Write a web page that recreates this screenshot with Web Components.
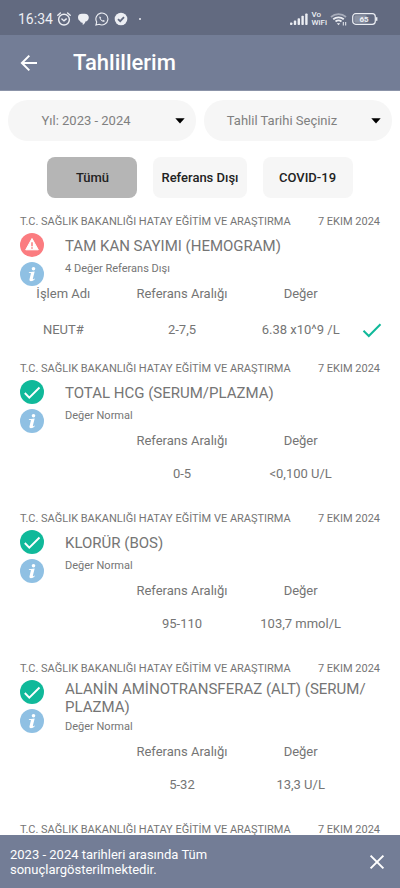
<!DOCTYPE html>
<html lang="tr">
<head>
<meta charset="utf-8">
<meta name="viewport" content="width=device-width, initial-scale=1">
<title>Tahlillerim</title>
<style>
  html, body { margin: 0; height: 100%; }
  body { font-family: Roboto, "Noto Sans", sans-serif; font-size: 13px; line-height: 16px; color: #757575; background: #fff;
    --bar: #737d96; --bar-dark: #626a80; --field: #f6f6f6; --ok: #10b99a; }
</style>
</head>
<body>
<lab-app>
  <status-bar slot="top"></status-bar>
  <app-header slot="top">Tahlillerim</app-header>

  <filter-row>
    <filter-select label="Yıl" options="Yıl: 2023 - 2024|Yıl: 2022 - 2023"></filter-select>
    <filter-select label="Tahlil tarihi" options="Tahlil Tarihi Seçiniz|7 Ekim 2024"></filter-select>
  </filter-row>
  <chip-row>
    <filter-chip selected>Tümü</filter-chip>
    <filter-chip>Referans Dışı</filter-chip>
    <filter-chip>COVID-19</filter-chip>
  </chip-row>

  <lab-record state="warn">
    <span slot="place">T.C. SAĞLIK BAKANLIĞI HATAY EĞİTİM VE ARAŞTIRMA</span>
    <span slot="date">7 EKIM 2024</span>
    <span slot="name">TAM KAN SAYIMI (HEMOGRAM)</span>
    <span slot="note">4 Değer Referans Dışı</span>
    <result-table item="NEUT#" range="2-7,5" value="6.38 x10^9 /L"></result-table>
  </lab-record>
  <lab-record state="ok">
    <span slot="place">T.C. SAĞLIK BAKANLIĞI HATAY EĞİTİM VE ARAŞTIRMA</span>
    <span slot="date">7 EKIM 2024</span>
    <span slot="name">TOTAL HCG (SERUM/PLAZMA)</span>
    <span slot="note">Değer Normal</span>
    <result-table range="0-5" value="&lt;0,100 U/L"></result-table>
  </lab-record>
  <lab-record state="ok">
    <span slot="place">T.C. SAĞLIK BAKANLIĞI HATAY EĞİTİM VE ARAŞTIRMA</span>
    <span slot="date">7 EKIM 2024</span>
    <span slot="name">KLORÜR (BOS)</span>
    <span slot="note">Değer Normal</span>
    <result-table range="95-110" value="103,7 mmol/L"></result-table>
  </lab-record>
  <lab-record state="ok">
    <span slot="place">T.C. SAĞLIK BAKANLIĞI HATAY EĞİTİM VE ARAŞTIRMA</span>
    <span slot="date">7 EKIM 2024</span>
    <span slot="name">ALANİN AMİNOTRANSFERAZ (ALT) (SERUM/<wbr>PLAZMA)</span>
    <span slot="note">Değer Normal</span>
    <result-table range="5-32" value="13,3 U/L"></result-table>
  </lab-record>
  <lab-record state="head">
    <span slot="place">T.C. SAĞLIK BAKANLIĞI HATAY EĞİTİM VE ARAŞTIRMA</span>
    <span slot="date">7 EKIM 2024</span>
  </lab-record>

  <snack-bar slot="bottom">2023 - 2024 tarihleri arasında Tüm sonuçlargösterilmektedir.</snack-bar>
</lab-app>

<script>
const define = (name, html, setup) => customElements.define(name, class extends HTMLElement {
  constructor() {
    super();
    const t = document.createElement('template');
    t.innerHTML = html;
    this.attachShadow({ mode: 'open' }).append(t.content.cloneNode(true));
  }
  connectedCallback() { if (setup) setup(this, this.shadowRoot); }
});

define('lab-app', `
<style>
  :host { display: flex; flex-direction: column; height: 100vh; }
  main { flex: 1; min-height: 0; overflow-y: auto; scrollbar-width: none; padding-top: 9px; }
</style>
<slot name="top"></slot><main><slot></slot></main><slot name="bottom"></slot>`);

define('status-bar', `
<style>
  :host { display: flex; align-items: center; justify-content: space-between; height: 35px; padding: 2px 22px 0 18px;
    box-sizing: border-box; background: var(--bar-dark); color: #eceef3; }
  div { display: flex; align-items: center; }
  .l { gap: 4px; } .r { gap: 3px; }
  time { font-size: 14px; }
  .vo { font-size: 8px; line-height: 8px; font-weight: 500; }
  svg { display: block; }
  .l svg + svg { margin-left: 1px; }
</style>
<div class="l">
  <time>16:34</time>
  <svg width="14" height="14" viewBox="0 0 14 14" fill="none" stroke="currentColor" stroke-width="1.4" stroke-linecap="round"><circle cx="7" cy="7.6" r="5.400"/><path d="M.8 3.2 3.4 1M13.2 3.2 10.600 1M4.9 6.9 7 8.9l2.3-2"/></svg>
  <svg width="14" height="14" viewBox="0 0 14 14" fill="currentColor"><path d="M2 5.2C2 2.800 3.700 1.700 6 1.700h2.600c2.600 0 4.200 1.500 4.200 3.700S11.200 9.200 9.400 9.600C9.100 11.300 8.200 12.300 6.800 13L6.600 10.800H6.200C4.900 10.800 4.200 10.100 4.100 9.100 2.800 8.500 2 7.200 2 5.200Z"/></svg>
  <svg width="14" height="14" viewBox="0 0 14 14" fill="none" stroke="currentColor" stroke-width="1.100"><path d="M.9 13.100 1.700 10A6 6 0 1 1 4.100 12.300Z"/><path d="M4.800 4.200c-1.200 1 .1 3.100 1.300 4.200s3 1.900 3.900.7l-1.500-1.200-.9.7C6.800 8.200 6 7.400 5.600 6.500l.6-.8Z" fill="currentColor" stroke="none"/></svg>
  <svg width="14" height="14" viewBox="0 0 14 14"><circle cx="7" cy="7" r="6.300" fill="currentColor"/><path d="m4 7.100 2.200 2.100L10 5.100" fill="none" stroke="#626a80" stroke-width="1.800"/></svg>
  <svg width="14" height="4" viewBox="0 0 14 4"><circle cx="7" cy="2" r="1" fill="currentColor"/></svg>
</div>
<div class="r">
  <svg width="18" height="12" viewBox="0 0 18 12" fill="currentColor"><rect y="9.500" width="2.400" height="2.500" rx=".8"/><rect x="3.800" y="7.600" width="2.400" height="4.400" rx=".8"/><rect x="7.600" y="5.200" width="2.400" height="6.800" rx=".8"/><rect x="11.400" y="2.800" width="2.400" height="9.200" rx=".8"/><rect x="15.200" y=".4" width="2.400" height="11.600" rx=".8"/></svg>
  <span class="vo">Vo<br>WiFi</span>
  <svg width="18" height="14" viewBox="0 0 18 14" fill="none" stroke="currentColor" stroke-width="1.800"><path d="M1 5A11.500 11.500 0 0 1 16 5" opacity=".5"/><path d="M3.200 7.300a8.200 8.200 0 0 1 10.600 0"/><path d="M5.500 9.500a5 5 0 0 1 6 0"/><path d="m6.800 11.200 1.700 2 1.700-2Z" fill="currentColor" stroke="none"/><path d="M13.300 10v3.500M15.700 10v3.500" stroke-width="1"/></svg>
  <svg width="27" height="14" viewBox="0 0 27 14"><rect x="1.700" y="1.700" width="22.600" height="10.600" rx="3" fill="none" stroke="currentColor" stroke-width="1.200"/><rect x="3.300" y="3.300" width="12.500" height="7.400" rx="1.500" fill="currentColor" opacity=".3"/><path d="M25.600 5.200v3.600" stroke="currentColor" stroke-width="1.600"/><text x="13" y="10" font-size="8" font-weight="700" text-anchor="middle" fill="currentColor">65</text></svg>
</div>`);

define('app-header', `
<style>
  :host { display: flex; align-items: center; gap: 31px; height: 56px; padding: 0 16px; background: var(--bar); color: #fff; border-bottom: 1px solid #8b93a8; box-sizing: border-box; }
  button { all: unset; display: flex; width: 26px; height: 26px; align-items: center; justify-content: center; cursor: pointer; }
  h1 { margin: 0; font-size: 22px; line-height: 28px; font-weight: 500; }
</style>
<button aria-label="Geri"><svg width="18" height="18" viewBox="0 0 18 18" fill="none" stroke="#fff" stroke-width="2"><path d="M17 9H2.200M9.300 1.600 1.900 9l7.400 7.400"/></svg></button>
<h1><slot></slot></h1>`);

define('filter-row', `
<style>:host { display: grid; grid-template-columns: 1fr 1fr; gap: 8px; padding: 0 8px; }</style><slot></slot>`);

define('filter-select', `
<style>
  :host { display: grid; align-items: center; min-width: 0; }
  select { grid-area: 1 / 1; appearance: none; border: 0; margin: 0; width: 100%; height: 41px; border-radius: 20px; padding: 0 32px 0 0;
    background: var(--field); color: #808080; font: inherit; font-size: 13px; text-align: center; text-align-last: center; }
  svg { grid-area: 1 / 1; justify-self: end; margin-right: 11px; pointer-events: none; }
</style>
<select></select><svg width="10" height="6" viewBox="0 0 10 6"><path d="M.3.300h9.400L5 5.500Z" fill="#000"/></svg>`,
(host, root) => {
  const s = root.querySelector('select');
  s.setAttribute('aria-label', host.getAttribute('label'));
  s.replaceChildren(...host.getAttribute('options').split('|').map(o => new Option(o)));
});

define('chip-row', `
<style>:host { display: flex; justify-content: center; gap: 16px; padding: 16px 8px; }</style><slot></slot>`);

define('filter-chip', `
<style>
  :host { display: block; }
  button { border: 0; margin: 0; min-width: 90px; height: 41px; padding: 0 8px; border-radius: 8px; background: var(--field);
    color: #222; font: inherit; font-size: 13px; font-weight: 500; }
  :host([selected]) button { background: #b5b5b5; }
</style>
<button><slot></slot></button>`);

define('lab-record', `
<style>
  :host { display: block; }
  header { display: flex; justify-content: space-between; padding: 0 20px 4px; font-size: 11px; line-height: 15px; white-space: nowrap; }
  .body { display: flex; gap: 21px; padding: 0 20px; }
  .icons { display: flex; flex-direction: column; gap: 5px; }
  .icons svg { display: block; }
  button { all: unset; display: block; cursor: pointer; }
  .text { flex: 1; min-width: 0; padding-bottom: 10px; }
  h2 { margin: 0; min-height: 25px; display: flex; align-items: center; font-size: 15px; line-height: 18px; font-weight: 400; }
  p { margin: 4px 0 0; font-size: 11px; line-height: 14px; }
  .warn, .ok { display: none !important; }
  :host([state=warn]) .warn, :host([state=ok]) .ok { display: block !important; }
  :host([state=head]) .body { display: none; }
</style>
<header><slot name="place"></slot><slot name="date"></slot></header>
<div class="body">
  <div class="icons">
    <svg class="warn" width="24" height="24" viewBox="0 0 24 24"><circle cx="12" cy="12" r="12" fill="#fb7c80"/><path d="M12 5.500 18.300 16.800H5.700Z" fill="#fff" stroke="#fff" stroke-width="1" stroke-linejoin="round"/><path d="M12 9.200v4M12 14.300v1.500" stroke="#fb7c80" stroke-width="1.500"/></svg>
    <svg class="ok" width="24" height="24" viewBox="0 0 24 24"><circle cx="12" cy="12" r="12" fill="#10b99a"/><path d="m4.800 13 4.500 4.600L19.500 7.500" fill="none" stroke="#fff" stroke-width="1.900"/></svg>
    <button aria-label="Bilgi"><svg width="24" height="24" viewBox="0 0 24 24"><circle cx="12" cy="12" r="12" fill="#8fc0e3"/><circle cx="13.500" cy="6.700" r="1.800" fill="#fff"/><path d="M8.900 10.300 14.700 9.600 12.900 16.600C12.700 17.500 13.200 17.500 14.400 16.400L14.900 16.900C12.800 19.700 8.900 20 9.500 17.200L10.900 11.500C11 11 10.400 11 8.900 11.100Z" fill="#fff"/></svg></button>
  </div>
  <div class="text"><h2><span><slot name="name"></slot></span></h2><p><slot name="note"></slot></p></div>
</div>
<slot></slot>`);

define('result-table', `
<style>
  :host { display: block; padding: 0 16px 29px 4px; }
  :host([item]) { padding-bottom: 19px; }
  table { width: 100%; table-layout: fixed; border-collapse: collapse; }
  th, td { padding: 0; font-size: 13px; line-height: 16px; font-weight: 400; text-align: center; }
  .c { width: 24px; }
  td { padding-top: 17px; }
  :host([item]) td { height: 24px; padding-top: 16px; }
  svg { display: none; }
  :host([item]) svg { display: block; }
</style>
<table>
  <thead><tr><th class="i"></th><th>Referans Aralığı</th><th>Değer</th><th class="c"></th></tr></thead>
  <tbody><tr><td class="item"></td><td class="range"></td><td class="value"></td>
    <td class="c"><svg width="24" height="24" viewBox="0 0 24 24" role="img" aria-label="Normal"><path d="m3.500 12.800 5.300 5.200L20.500 6.200" fill="none" stroke="#10b99a" stroke-width="2"/></svg></td></tr></tbody>
</table>`,
(host, root) => {
  for (const k of ['item', 'range', 'value']) root.querySelector('.' + k).textContent = host.getAttribute(k) || '';
  if (host.hasAttribute('item')) root.querySelector('.i').textContent = 'İşlem Adı';
});

define('snack-bar', `
<style>
  :host { display: flex; align-items: center; justify-content: space-between; gap: 16px; min-height: 53px; padding: 0 15px 0 10px; background: var(--bar); color: #fff;
    font-size: 13px; line-height: 15px; }
  p { margin: 0; max-width: 240px; }
  button { all: unset; display: flex; cursor: pointer; }
</style>
<p role="status"><slot></slot></p>
<button aria-label="Kapat"><svg width="16" height="16" viewBox="0 0 16 16" fill="none" stroke="#fff" stroke-width="2"><path d="m1.600 1.600 12.800 12.800M14.400 1.600 1.600 14.400"/></svg></button>`);
</script>
</body>
</html>
